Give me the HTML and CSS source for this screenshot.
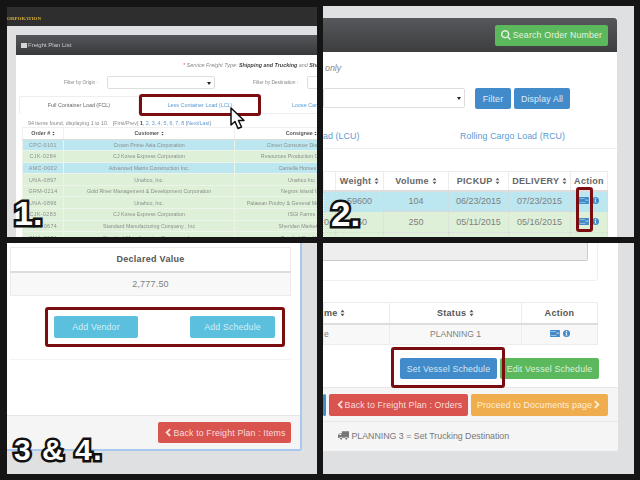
FILE: index.html
```html
<!DOCTYPE html>
<html lang="en">
<head>
  <meta charset="UTF-8">
  <title>Freight Plan Steps</title>
  <link rel="stylesheet" href="styles.css">
</head>
<body>
  <svg class="defs" width="0" height="0">
    <symbol id="sort" viewBox="0 0 10 16"><path d="M1 6.500 5 1.500l4 5zM1 9.500h8l-4 5z"/></symbol>
    <symbol id="plan" viewBox="0 0 14 10"><path fill-rule="evenodd" d="M0 0h14v10H0zM1 2v1h7V2zM9 4v1h4V4zM1 7v1h8V7z"/></symbol>
    <symbol id="info" viewBox="0 0 10 10"><path fill-rule="evenodd" d="M5 0a5 5 0 1 1 0 10A5 5 0 0 1 5 0zM4 1.500v1.600h2V1.500zM3.500 4v1h.7v2h-.7v1h3V7h-.7V4z"/></symbol>
    <symbol id="back" viewBox="0 0 8 12"><path d="M6 .5 7.800 2.300 4 6l3.800 3.700L6 11.500.500 6z"/></symbol>
    <symbol id="next" viewBox="0 0 8 12"><path d="M2 .5.200 2.300 4 6 .2 9.700 2 11.500 7.500 6z"/></symbol>
    <symbol id="search" viewBox="0 0 12 12"><path fill-rule="evenodd" d="M5 0a5 5 0 0 1 4 8l3 2.800-1.300 1.200-2.900-2.900A5 5 0 1 1 5 0zm0 1.800a3.200 3.200 0 1 0 0 6.400 3.200 3.200 0 0 0 0-6.400z"/></symbol>
    <symbol id="truck" viewBox="0 0 14 11"><path d="M5 0h9v8.500h-2a1.500 1.500 0 0 0-3 0H5.500a1.500 1.500 0 0 0-3 0H0V5l2-2.500h3zM1 5h3V3.300H2.400zM4 8a1.300 1.300 0 1 1 0 2.800A1.300 1.300 0 0 1 4 8zm6.500 0a1.300 1.300 0 1 1 0 2.800 1.300 1.300 0 0 1 0-2.800z"/></symbol>
  </svg>

  <!-- step 1 -->
  <section class="shot shot-list">
    <div class="soft">
      <div class="topbar"><span class="brand">ORPORATION</span></div>
      <div class="list-card">
        <div class="list-head"><span class="grid-ico"></span>Freight Plan List</div>
        <p class="note"><span class="req">*</span> Service Freight Type: <b>Shipping and Trucking</b> and <b>Shi</b></p>
        <div class="filter-row">
          <span class="filter-label origin">Filter by Origin :</span>
          <span class="fake-select sel-origin"></span>
          <span class="filter-label dest">Filter by Destination :</span>
          <span class="fake-select sel-dest"></span>
        </div>
        <div class="tabs">
          <span class="tab tab-active">Full Container Load (FCL)</span>
          <a class="tab tab-lcl">Less Container Load (LCL)</a>
          <a class="tab tab-loose">Loose Car</a>
        </div>
        <p class="pager">94 items found, displaying 1 to 10. &nbsp; [First/Prev] <b>1</b>, <a>2</a>, <a>3</a>, <a>4</a>, <a>5</a>, <a>6</a>, <a>7</a>, <a>8</a> [<a>Next/Last</a>]</p>
        <table class="orders">
          <colgroup><col class="c-order"><col class="c-cust"><col class="c-cons"></colgroup>
          <tr><th>Order # <svg class="ic-sort"><use href="#sort"/></svg></th><th>Customer <svg class="ic-sort"><use href="#sort"/></svg></th><th>Consignee <svg class="ic-sort"><use href="#sort"/></svg></th></tr>
          <tr class="blue"><td>CPC-0101</td><td>Crown Prime Asia Corporation</td><td>Cimen Consumer Distributors</td></tr>
          <tr class="green"><td>CJK-0284</td><td>CJ Korea Express Corporation</td><td>Resources Production Corporation</td></tr>
          <tr class="blue"><td>AMC-0002</td><td>Advanced Matrix Construction Inc.</td><td>Camella Homes Inc</td></tr>
          <tr class="green"><td>UNA-0897</td><td>Unahco, Inc.</td><td>Unahco Inc</td></tr>
          <tr class="green"><td>GRM-0214</td><td>Gold River Management &amp; Development Corporation</td><td>Negros Island Inc</td></tr>
          <tr class="green"><td>UNA-0896</td><td>Unahco, Inc.</td><td>Palawan Poultry &amp; General Merchandise Store</td></tr>
          <tr class="green"><td>CJK-0283</td><td>CJ Korea Express Corporation</td><td>ISGI Farms</td></tr>
          <tr class="green"><td>SMA-0674</td><td>Standard Manufacturing Company , Inc</td><td>Sheridan Marketing</td></tr>
          <tr class="green"><td>SMA-0674</td><td>Standard Manufacturing Company , Inc</td><td>Bacolod Steel Inc</td></tr>
        </table>
      </div>
    </div>
    <span class="mark mark-lcl"></span>
    <svg class="cursor" viewBox="0 0 16 24"><path d="M1 1v17l4-3.500 3 7 3.500-1.500-3-6.500H14z" fill="#fff" stroke="#111" stroke-width="1.500" stroke-linejoin="round"/></svg>
    <span class="step step-1">1.</span>
  </section>

  <!-- step 2 -->
  <section class="shot shot-search">
    <div class="search-card">
      <div class="search-head"><a class="btn btn-green btn-search"><svg class="ic"><use href="#search"/></svg> Search Order Number</a></div>
      <p class="only">only</p>
      <div class="search-filter">
        <span class="fake-select sel-wide"></span>
        <a class="btn btn-blue btn-filter">Filter</a>
        <a class="btn btn-blue btn-all">Display All</a>
      </div>
      <div class="tabs-big"><a class="cut-tab">ad (LCU)</a><a class="rcu-tab">Rolling Cargo Load (RCU)</a></div>
      <table class="loads">
        <colgroup><col class="l-cut"><col class="l-wt"><col class="l-vol"><col class="l-pick"><col class="l-del"><col class="l-act"></colgroup>
        <tr><th></th><th>Weight <svg class="ic-sort"><use href="#sort"/></svg></th><th>Volume <svg class="ic-sort"><use href="#sort"/></svg></th><th>PICKUP <svg class="ic-sort"><use href="#sort"/></svg></th><th>DELIVERY <svg class="ic-sort"><use href="#sort"/></svg></th><th>Action</th></tr>
        <tr class="blue"><td></td><td>59600</td><td>104</td><td>06/23/2015</td><td>07/23/2015</td><td class="acts"><svg class="ic-plan"><use href="#plan"/></svg><svg class="ic-info"><use href="#info"/></svg></td></tr>
        <tr class="green"><td class="frag">0</td><td>250</td><td>250</td><td>05/11/2015</td><td>05/16/2015</td><td class="acts"><svg class="ic-plan"><use href="#plan"/></svg><svg class="ic-info"><use href="#info"/></svg></td></tr>
        <tr class="green"><td></td><td></td><td></td><td></td><td></td><td></td></tr>
      </table>
    </div>
    <span class="mark mark-action"></span>
    <span class="step step-2">2.</span>
  </section>

  <!-- step 3 and 4 -->
  <section class="shot shot-items">
    <div class="items-card">
      <div class="items-body">
        <table class="declared">
          <colgroup><col class="d-cut"><col></colgroup>
          <tr><th></th><th>Declared Value</th></tr>
          <tr><td></td><td>2,777.50</td></tr>
        </table>
        <div class="add-row">
          <a class="btn btn-cyan btn-vendor">Add Vendor</a>
          <a class="btn btn-cyan btn-sched">Add Schedule</a>
        </div>
        <div class="soft-rule"></div>
      </div>
      <div class="items-foot"><a class="btn btn-red btn-back-items"><svg class="ic-chev"><use href="#back"/></svg> Back to Freight Plan : Items</a></div>
    </div>
    <span class="mark mark-add"></span>
    <span class="step step-3">3 &amp; 4.</span>
  </section>

  <section class="shot shot-vessel">
    <div class="vessel-card">
      <div class="vessel-body">
        <div class="inner-box"><div class="inner-well"></div></div>
        <table class="status">
          <colgroup><col class="s-name"><col class="s-status"><col class="s-act"></colgroup>
          <tr><th class="frag">me <svg class="ic-sort"><use href="#sort"/></svg></th><th>Status <svg class="ic-sort"><use href="#sort"/></svg></th><th>Action</th></tr>
          <tr><td class="frag">e</td><td>PLANNING 1</td><td class="acts"><svg class="ic-plan"><use href="#plan"/></svg><svg class="ic-info"><use href="#info"/></svg></td></tr>
        </table>
        <div class="vessel-btns">
          <a class="btn btn-blue btn-set">Set Vessel Schedule</a>
          <a class="btn btn-green btn-edit">Edit Vessel Schedule</a>
        </div>
      </div>
      <div class="vessel-foot">
        <a class="btn btn-blue btn-stub"></a>
        <a class="btn btn-red btn-back-orders"><svg class="ic-chev"><use href="#back"/></svg> Back to Freight Plan : Orders</a>
        <a class="btn btn-orange btn-docs">Proceed to Documents page <svg class="ic-chev"><use href="#next"/></svg></a>
      </div>
      <div class="vessel-status"><svg class="ic-truck"><use href="#truck"/></svg> PLANNING 3 = Set Trucking Destination</div>
    </div>
    <span class="mark mark-set"></span>
  </section>
</body>
</html>
```

FILE: styles.css
```css
/* general styling */
* {
  box-sizing: border-box;
  margin: 0;
  padding: 0;
}

html, body {
  height: 100%;
  margin: 0;
}

body {
  background-color: #151515;
  font-family: "Liberation Sans", Arial, sans-serif;
  color: #777;
  overflow: hidden;
  position: relative;
}

.defs {
  position: absolute;
}

/* the four screenshots sit on a free canvas */
.shot {
  position: absolute;
  width: 311px;
  height: 231px;
  background-color: #dfe0e2;
  overflow: hidden;
}

.shot-list { left: 7px; top: 7px; width: 310px; height: 230px; }
.shot-search { left: 323px; top: 6px; height: 231px; }
.shot-items { left: 7px; top: 243px; width: 310px; }
.shot-vessel { left: 323px; top: 243px; }

table {
  border-collapse: collapse;
  table-layout: fixed;
}

a { color: #5b9bd5; }

.btn {
  display: flex;
  align-items: center;
  justify-content: center;
  height: 21px;
  border-radius: 2px;
  color: #dcecf6;
  font-size: 8.800px;
  letter-spacing: .15px;
  white-space: nowrap;
  flex: none;
}

.btn-green { background-color: #5cb85c; color: #e3f3e3; }
.btn-blue { background-color: #428bca; }
.btn-cyan { background-color: #5bc0de; }
.btn-red { background-color: #d9534f; }
.btn-orange { background-color: #f0ad4e; }

.ic { width: 10px; height: 10px; fill: currentColor; margin-right: 2px; }
.ic-sort { width: 5px; height: 8px; fill: currentColor; vertical-align: -1px; }
.ic-plan { width: 10px; height: 7px; fill: #428bca; }
.ic-info { width: 7px; height: 7px; fill: #428bca; margin-left: 3px; }
.ic-chev { width: 6px; height: 9px; fill: currentColor; margin: 0 2px; }
.ic-truck { width: 11px; height: 9px; fill: #777; vertical-align: -1px; }

.acts { white-space: nowrap; }

.blue td { background-color: #bce6f0; }
.green td { background-color: #dff0d8; }

.fake-select {
  display: block;
  position: relative;
  height: 13px;
  background: #fff;
  border: 1px solid #ddd;
  border-radius: 2px;
}

.fake-select::after {
  content: "";
  position: absolute;
  right: 3px;
  top: 50%;
  margin-top: -1px;
  border: 2px solid transparent;
  border-top: 3px solid #222;
  border-bottom: 0;
}

/* red highlight boxes */
.mark {
  position: absolute;
  border: 3px solid #7b0d10;
  border-radius: 3px;
}

.mark-lcl { left: 132px; top: 87px; width: 122px; height: 22px; }
.mark-action { left: 253px; top: 181px; width: 17px; height: 45px; }
.mark-add { left: 38px; top: 64px; width: 240px; height: 40px; }
.mark-set { left: 68px; top: 104px; width: 114px; height: 41px; }

/* big step numbers */
.step {
  position: absolute;
  color: #fff;
  font-weight: bold;
  line-height: 30px;
  -webkit-text-stroke: 5px #111;
  paint-order: stroke fill;
}

.step-1 { left: 7px; top: 191px; font-size: 34px; }
.step-2 { left: 8px; top: 193px; font-size: 35px; }
.step-3 { left: 7px; top: 192px; letter-spacing: 1.500px; font-size: 30px; }

.cursor {
  position: absolute;
  left: 223px;
  top: 100px;
  width: 16px;
  height: 24px;
}

/* step 1 */
.soft {
  filter: blur(.35px);
  width: 430px;
}

.topbar {
  height: 19px;
  background-color: #2e2e2e;
  display: flex;
  align-items: flex-end;
  padding-bottom: 4px;
}

.brand {
  color: #d9b23a;
  font-family: "Liberation Serif", serif;
  font-weight: bold;
  font-size: 5px;
  line-height: 6px;
}

.list-card {
  margin: 9px 0 0 9px;
  background-color: #fff;
  height: 210px;
}

.list-head {
  height: 20px;
  background: linear-gradient(#55575a, #37393b);
  color: #c9cbcd;
  font-size: 6px;
  line-height: 20px;
  padding-left: 5px;
  display: flex;
  align-items: center;
}

.grid-ico {
  width: 6px;
  height: 5px;
  background-color: #d5d5d5;
  margin-right: 1px;
}

.note {
  font-style: italic;
  color: #888;
  font-size: 5.400px;
  line-height: 8px;
  padding: 6px 0 0 167px;
}

.note b { color: #444; }
.req { color: #d9534f; }

.filter-row {
  display: flex;
  align-items: center;
  margin-top: 7px;
  height: 13px;
  font-size: 4.800px;
  color: #888;
}

.filter-label.origin { margin-left: 48px; width: 43px; }
.filter-label.dest { margin-left: 38px; width: 54px; }
.sel-origin { width: 108px; }
.sel-dest { width: 80px; }

.tabs {
  display: flex;
  align-items: center;
  height: 17px;
  margin: 8px 0 0 3px;
  border-bottom: 1px solid #eee;
  font-size: 5.400px;
  line-height: 17px;
  color: #666;
}

.tab { white-space: nowrap; text-align: center; }

.tab-active {
  width: 120px;
  background: #fff;
  border: 1px solid #eee;
  border-bottom: 0;
  border-radius: 2px 2px 0 0;
}

.tab-lcl { width: 122px; }
.tab-loose { margin-left: 31px; }

.pager {
  font-size: 5.300px;
  color: #888;
  line-height: 8px;
  padding: 5px 0 0 12px;
}

.pager b { color: #444; }

.orders {
  width: 346px;
  margin: 0 0 0 6px;
  font-size: 5.300px;
  text-align: center;
}

.c-order { width: 41px; }
.c-cust { width: 171px; }
.c-cons { width: 134px; }

.orders th {
  height: 11.500px;
  color: #555;
  border: 1px solid #f0f0f0;
  border-bottom: 1px solid #ddd;
  line-height: 8px;
}

.orders .ic-sort { width: 3px; height: 5px; vertical-align: -.5px; }

.orders td {
  height: 11.600px;
  padding: 0;
  line-height: 8px;
  color: #8a8f8c;
  border: 1px solid #ecf3e8;
  white-space: nowrap;
  overflow: hidden;
}

.orders td:first-child { letter-spacing: .4px; }

/* step 2 */
.search-card {
  width: 294px;
  height: 100%;
  margin-top: 12px;
  background: #fff;
}

.search-head {
  height: 34px;
  background: linear-gradient(#55575a, #3c3e40);
  border-radius: 0 3px 0 0;
  display: flex;
  justify-content: flex-end;
  align-items: center;
  padding-right: 9px;
}

.btn-search { width: 113px; }

.only {
  font-style: italic;
  font-size: 8.800px;
  color: #888;
  line-height: 12px;
  padding: 10px 0 0 2px;
  height: 22px;
}

.search-filter {
  display: flex;
  margin-top: 14px;
}

.sel-wide {
  width: 142px;
  height: 20px;
  margin-right: 10px;
}

.btn-filter { width: 36px; margin-right: 3px; }
.btn-all { width: 56px; }

.tabs-big {
  display: flex;
  height: 40px;
  padding-top: 19px;
  font-size: 8.800px;
  line-height: 16px;
  border-bottom: 1px solid #eee;
}

.tabs-big a { letter-spacing: .1px; }
.cut-tab { width: 137px; }

.loads {
  width: 285px;
  margin-top: 22px;
  font-size: 9px;
  text-align: center;
}

.l-cut { width: 12px; }
.l-wt { width: 48px; }
.l-vol { width: 65px; }
.l-pick { width: 60px; }
.l-del { width: 62px; }

.loads th {
  height: 19px;
  color: #666;
  letter-spacing: .3px;
  border: 1px solid #ececec;
  border-bottom: 2px solid #ddd;
  white-space: nowrap;
}

.loads td {
  height: 21px;
  border: 1px dotted #d8d8d8;
  color: #808080;
}

.frag { text-align: left; }

/* step 3 and 4 */
.items-card {
  width: 295px;
  height: 208px;
  background: #fff;
  border-right: 2px solid #a9c8f0;
  border-bottom: 2px solid #a9c8f0;
  border-radius: 0 0 3px 0;
  display: flex;
  flex-direction: column;
}

.items-body {
  flex: 1;
  padding: 4px 0 0 3px;
}

.declared {
  width: 281px;
  font-size: 9px;
  text-align: center;
}

.d-cut { width: 0; }

.declared th {
  height: 24px;
  color: #555;
  letter-spacing: .3px;
  border: 1px solid #ececec;
  border-bottom: 2px solid #ddd;
}

.declared td {
  height: 24px;
  color: #808080;
  letter-spacing: .2px;
  background-color: #f8f8f8;
  border: 1px solid #ececec;
}

.add-row {
  display: flex;
  justify-content: space-between;
  margin: 20px 0 0 44px;
  width: 221px;
}

.add-row .btn { height: 22px; color: #d4eef6; }
.btn-vendor { width: 84px; }
.btn-sched { width: 85px; }

.soft-rule {
  height: 1px;
  background-color: #f4f4f4;
  width: 281px;
  margin-top: 21px;
}

.items-foot {
  flex: none;
  height: 34px;
  background-color: #f5f5f5;
  border-top: 1px solid #e5e5e5;
  display: flex;
  justify-content: flex-end;
  align-items: center;
  padding-right: 9px;
}

.btn-back-items { width: 133px; color: #fbdcdb; }

.vessel-card {
  width: 295px;
  height: 208px;
  background: #fff;
  border-radius: 0 0 3px 0;
  display: flex;
  flex-direction: column;
}

.vessel-body {
  height: 144px;
}

.inner-box {
  width: 275px;
  height: 38px;
  border: 1px solid #f0f0f0;
  border-width: 0 1px 1px 0;
  border-radius: 0 0 3px 0;
}

.inner-well {
  width: 265px;
  height: 18px;
  background-color: #eee;
  border: 1px solid #ccc;
  border-width: 0 1px 1px 0;
  border-radius: 0 0 2px 0;
}

.status {
  width: 275px;
  margin-top: 21px;
  font-size: 9px;
  text-align: center;
}

.s-name { width: 66px; }
.s-status { width: 132px; }

.status th {
  height: 21px;
  color: #555;
  letter-spacing: .3px;
  border: 1px solid #ececec;
  border-bottom: 2px solid #ddd;
  white-space: nowrap;
}

.status td {
  height: 21px;
  color: #808080;
  font-size: 8.600px;
  background-color: #f8f8f8;
  border: 1px solid #ececec;
}

.vessel-btns {
  display: flex;
  margin: 13px 0 0 77px;
  gap: 3px;
}

.btn-set { width: 97px; color: #d5e6f3; }
.btn-edit { width: 99px; color: #dcf0dc; }

.vessel-foot {
  flex: none;
  height: 35px;
  background-color: #f5f5f5;
  border-top: 1px solid #e8e8e8;
  border-bottom: 1px solid #e8e8e8;
  display: flex;
  align-items: center;
  gap: 3px;
}

.vessel-foot .btn { height: 22px; }
.btn-stub { width: 3px; }
.btn-back-orders { width: 139px; color: #fbdcdb; }
.btn-docs { width: 137px; color: #fdeed8; }

.vessel-status {
  flex: 1;
  background-color: #f5f5f5;
  font-size: 8.800px;
  line-height: 29px;
  padding-left: 15px;
  border-radius: 0 0 3px 0;
}
```
